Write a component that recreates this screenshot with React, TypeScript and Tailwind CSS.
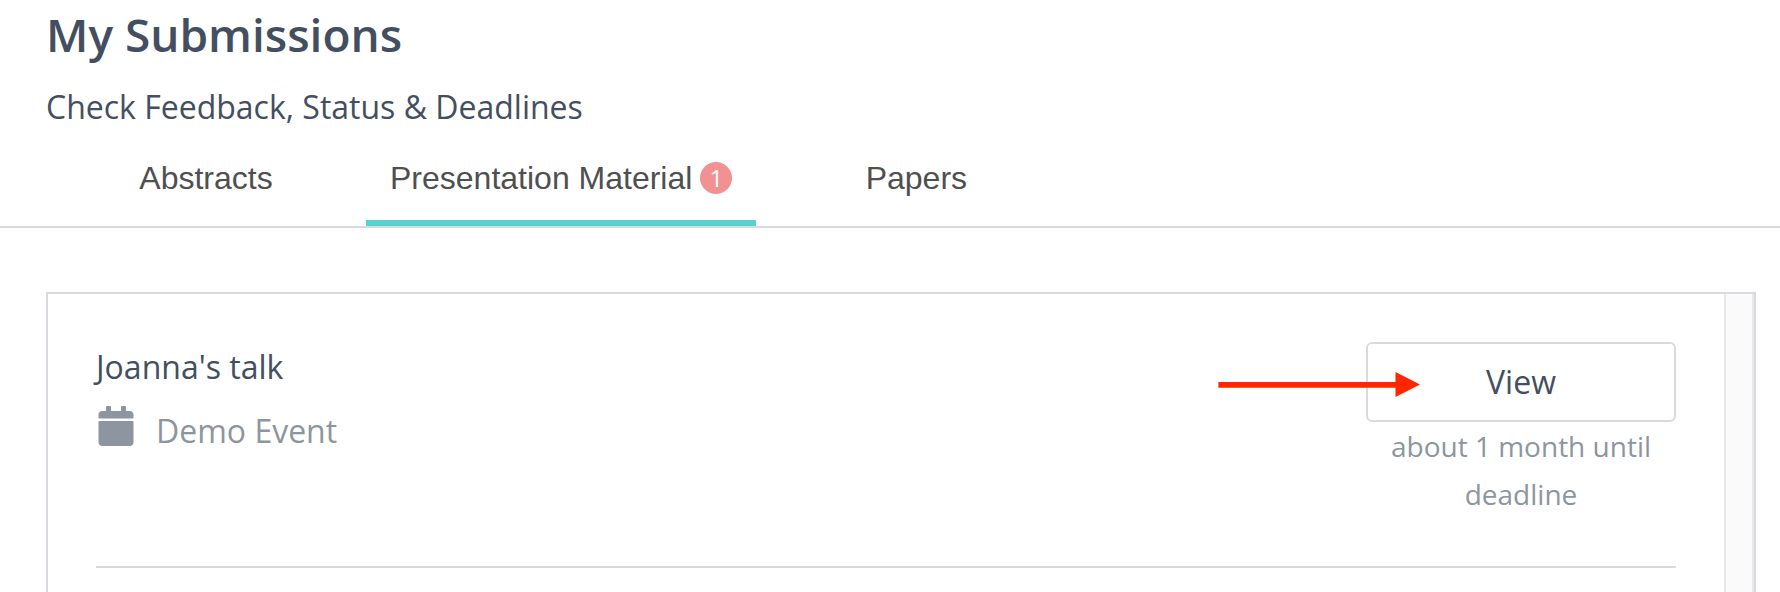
import { FaCalendar } from "react-icons/fa";

type Tab = {
  label: string;
  count?: number;
  active?: boolean;
};

type Submission = {
  id: number;
  title: string;
  event: string;
  deadline: string;
};

const tabs: Tab[] = [
  { label: "Abstracts" },
  { label: "Presentation Material", count: 1, active: true },
  { label: "Papers" },
];

const submissions: Submission[] = [
  {
    id: 1,
    title: "Joanna's talk",
    event: "Demo Event",
    deadline: "about 1 month until deadline",
  },
];

function TabBar() {
  return (
    <nav className="flex border-b-2 border-[#dad9df] pl-[46px] font-['Liberation_Sans',sans-serif]">
      {tabs.map((tab) => (
        <button
          key={tab.label}
          type="button"
          className={`flex h-[94px] min-w-80 items-start justify-center gap-2 border-b-[6px] px-6 pt-[22px] text-[32px] leading-[48px] text-[#4f4f4f] ${
            tab.active ? "border-[#58d2cd]" : "border-transparent"
          }`}
        >
          {tab.label}
          {tab.count && (
            <span className="mt-2 flex size-8 items-center justify-center rounded-full bg-[#f19191] font-['Open_Sans',sans-serif] text-2xl leading-8 text-white">
              {tab.count}
            </span>
          )}
        </button>
      ))}
    </nav>
  );
}

// Red pointer that sits over the left edge of the View button
function Arrow() {
  return (
    <svg
      className="pointer-events-none absolute top-[30px] -left-[148px]"
      width="203"
      height="26"
      viewBox="0 0 203 26"
      aria-hidden="true"
    >
      <path d="M0.4 10.1H177.5V0L202 12.4L177.5 24.9V15.8H0.4Z" fill="#ff2600" />
    </svg>
  );
}

function SubmissionRow({ submission }: { submission: Submission }) {
  return (
    <li className="flex items-start justify-between border-b-2 border-[#dad9df] pb-12">
      <div>
        <h2 className="text-[32px] leading-[50px]">{submission.title}</h2>
        <div className="mt-[14px] flex gap-5 text-[#8d95a0]">
          <FaCalendar className="size-10" />
          <p className="text-[32px] leading-[50px]">{submission.event}</p>
        </div>
      </div>

      <div className="relative w-[310px] text-center">
        <button
          type="button"
          className="block h-20 w-full rounded-md border-2 border-[#dad9df] text-[32px]"
        >
          View
        </button>
        <p className="px-4 text-[28px] leading-[48px] text-[#8d95a0]">{submission.deadline}</p>
        <Arrow />
      </div>
    </li>
  );
}

export default function App() {
  return (
    <main className="flex h-screen flex-col overflow-hidden bg-white font-['Open_Sans',sans-serif] text-[#434f60]">
      <header className="px-[46px]">
        <h1 className="text-[46px] leading-[68px] font-semibold">My Submissions</h1>
        <p className="mt-[14px] text-[32px] leading-[50px]">Check Feedback, Status &amp; Deadlines</p>
      </header>

      <TabBar />

      <section className="mt-16 mr-6 ml-[46px] flex flex-1 border-2 border-b-0 border-[#dad9df]">
        <ul className="flex-1 px-12 pt-12">
          {submissions.map((submission) => (
            <SubmissionRow key={submission.id} submission={submission} />
          ))}
        </ul>
        {/* Scrollbar track */}
        <div className="w-[30px] border-x-2 border-[#e8e8e8] bg-[#fafafa]" />
      </section>
    </main>
  );
}
